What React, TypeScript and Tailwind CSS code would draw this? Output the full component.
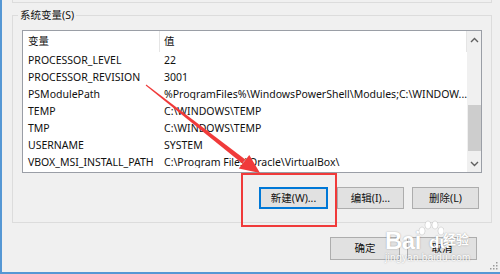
import React from 'react';

const rows: [string, string][] = [
  ['PROCESSOR_LEVEL', '22'],
  ['PROCESSOR_REVISION', '3001'],
  ['PSModulePath', '%ProgramFiles%\\WindowsPowerShell\\Modules;C:\\WINDOW...'],
  ['TEMP', 'C:\\WINDOWS\\TEMP'],
  ['TMP', 'C:\\WINDOWS\\TEMP'],
  ['USERNAME', 'SYSTEM'],
  ['VBOX_MSI_INSTALL_PATH', 'C:\\Program Files\\Oracle\\VirtualBox\\'],
];

const font = { fontFamily: '"Noto Sans", "Noto Sans CJK SC", sans-serif' };
const arial = { fontFamily: '"Liberation Sans", Arial, sans-serif' };

const Button: React.FC<{ label: string; focused?: boolean; className?: string }> = ({ label, focused, className }) => (
  <div
    className={
      'flex items-center justify-center text-[10.5px] text-[#111] bg-[#e1e1e1] border ' +
      (focused ? 'border-[#0078d7] shadow-[inset_0_0_0_1px_#0078d7]' : 'border-[#adadad]') +
      ' ' +
      (className ?? '')
    }
  >
    {label}
  </div>
);

export default function App() {
  return (
    <div
      className="relative w-[500px] h-[274px] bg-[#f0f0f0] overflow-hidden border-l-2 border-b-2 border-[#5597d4] leading-none"
      style={font}
    >
      {/* bottom edge of the previous group */}
      <div className="ml-[10px] w-[480px] h-[3px] border-l border-r border-b border-[#dcdcdc]" />

      {/* 系统变量 group */}
      <div className="relative ml-[10px] mt-[12px] w-[480px] h-[208px] border border-[#dcdcdc]">
        <div className="absolute -top-[7px] left-[5px] h-[12px] flex items-center px-[2px] bg-[#f0f0f0] text-[10.5px] text-[#111]">
          系统变量(S)
        </div>

        <div className="mt-[14px] ml-[9px] w-[460px] h-[143px] border border-[#9a9ea6] bg-white flex">
          <div className="flex-1 flex flex-col text-[10.5px] text-[#111]">
            <div className="h-[21px] flex items-center">
              <div className="w-[137px] h-full flex items-center pl-[5px] border-r border-[#e5e5e5]">变量</div>
              <div className="flex-1 h-full flex items-center pl-[4px] border-r border-[#e5e5e5]">值</div>
            </div>
            {rows.map(([name, value]) => (
              <div key={name} className="h-[17px] flex items-center whitespace-nowrap">
                <div className="w-[137px] pl-[5px]">{name}</div>
                <div className="flex-1 pl-[4px] overflow-hidden">{value}</div>
              </div>
            ))}
          </div>

          {/* scrollbar */}
          <div className="w-[15px] bg-[#f0f0f0] flex flex-col items-center">
            <div className="h-[17px] flex items-center justify-center">
              <svg width="9" height="6" viewBox="0 0 9 6">
                <path d="M1 5 L4.5 1.5 L8 5" fill="none" stroke="#606060" strokeWidth="1.4" />
              </svg>
            </div>
            <div className="mt-[57px] w-[13px] h-[46px] bg-[#cdcdcd]" />
            <div className="mt-auto h-[17px] flex items-center justify-center">
              <svg width="9" height="6" viewBox="0 0 9 6">
                <path d="M1 1 L4.5 4.5 L8 1" fill="none" stroke="#606060" strokeWidth="1.4" />
              </svg>
            </div>
          </div>
        </div>

        <div className="mt-[14px] flex">
          <Button label="新建(W)..." focused className="ml-[246px] w-[69px] h-[22px]" />
          <Button label="编辑(I)..." className="ml-[9px] w-[67px] h-[22px]" />
          <Button label="删除(L)" className="ml-[8px] w-[67px] h-[22px]" />
        </div>
      </div>

      <div className="mt-[14px] flex">
        <Button label="确定" className="ml-[328px] w-[70px] h-[23px]" />
        <Button label="取消" className="ml-[7px] w-[70px] h-[23px]" />
      </div>

      {/* resize grip */}
      <svg className="absolute right-[2px] bottom-[2px]" width="10" height="10" viewBox="0 0 10 10">
        {[
          [8, 2],
          [8, 5],
          [5, 5],
          [8, 8],
          [5, 8],
          [2, 8],
        ].map(([x, y]) => (
          <rect key={`${x}-${y}`} x={x} y={y} width="1.5" height="1.5" fill="#9a9a9a" />
        ))}
      </svg>

      {/* red highlight box */}
      <div className="absolute left-[239px] top-[173px] w-[96px] h-[54px] border-2 border-[#f03a3a]" />

      {/* red arrow */}
      <svg className="absolute left-[-2px] top-0 pointer-events-none" width="500" height="274" viewBox="0 0 500 274">
        <polygon points="146.3,84.6 145.7,85.4 242.3,163.6 245.3,159.6" fill="#f03a3a" />
        <polygon points="260,173 238.8,168.4 249.3,155" fill="#f03a3a" />
      </svg>

      {/* watermark */}
      <div className="absolute inset-0 pointer-events-none text-white [text-shadow:0_0_1.5px_rgba(0,0,0,0.35)]">
        <span className="absolute left-[383px] top-[229px] text-[24px] font-bold tracking-[-0.5px]" style={arial}>
          Bai
        </span>
        <svg className="absolute left-[416px] top-[220px]" width="26" height="18" viewBox="0 0 26 18">
          <g fill="#fff" stroke="rgba(0,0,0,0.2)" strokeWidth="0.6">
            <ellipse cx="4" cy="11" rx="3" ry="4" />
            <ellipse cx="10" cy="5" rx="3" ry="4" />
            <ellipse cx="17" cy="5" rx="3" ry="4" />
            <ellipse cx="23" cy="11" rx="3" ry="4" />
          </g>
        </svg>
        <span className="absolute left-[427px] top-[234px] text-[17px] font-bold" style={arial}>
          du
        </span>
        <span className="absolute left-[441px] top-[232px] text-[13px] font-bold" style={{ fontFamily: '"Noto Sans CJK SC", sans-serif' }}>
          经验
        </span>
        <span className="absolute left-[383px] top-[253px] text-[10px] tracking-[0.3px]" style={arial}>
          jingyan.baidu.com
        </span>
      </div>
    </div>
  );
}
